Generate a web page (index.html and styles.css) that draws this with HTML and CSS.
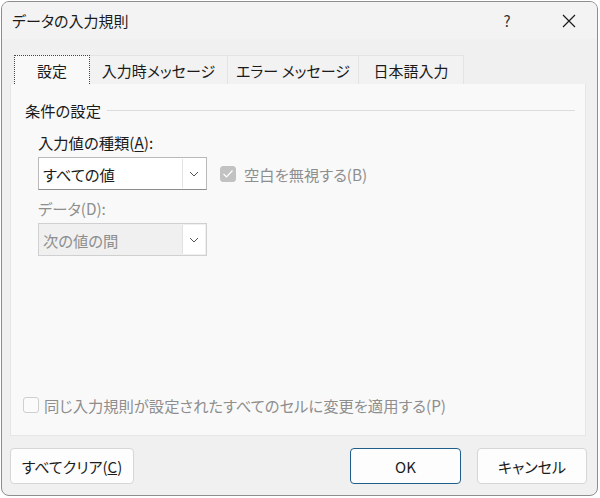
FILE: index.html
```html
<!DOCTYPE html>
<html lang="ja">

<head>
    <meta charset="UTF-8">
    <title>データの入力規則</title>
    <link rel="stylesheet" href="styles.css">
</head>

<body>
    <div class="window">
        <div class="titlebar">
            <span class="title">データの入力規則</span>
            <span class="help">?</span>
            <span class="close">
                <svg width="16" height="16" viewBox="0 0 16 16"><path d="M2 2 L14 14 M14 2 L2 14" stroke="#1a1a1a" stroke-width="1.2" fill="none"/></svg>
            </span>
        </div>

        <div class="tabs">
            <div class="tab active"><span class="focus">設定</span></div>
            <div class="tab">入力時メッセージ</div>
            <div class="tab">エラー メッセージ</div>
            <div class="tab">日本語入力</div>
        </div>

        <div class="panel">
            <div class="group-head">
                <span>条件の設定</span>
                <span class="rule"></span>
            </div>

            <div class="group">
                <div class="label">入力値の種類(<u>A</u>):</div>
                <div class="row">
                    <div class="select">
                        <span class="value">すべての値</span>
                        <span class="drop">
                            <svg width="10" height="6" viewBox="0 0 10 6"><path d="M1 1 L5 5 L9 1" stroke="#555" stroke-width="1" fill="none"/></svg>
                        </span>
                    </div>
                    <label class="check disabled">
                        <span class="box checked">
                            <svg width="12" height="10" viewBox="0 0 12 10"><path d="M1.5 5 L4.5 8 L10.5 1.5" stroke="#fff" stroke-width="1.2" fill="none"/></svg>
                        </span>
                        空白を無視する(B)
                    </label>
                </div>
                <div class="label disabled">データ(D):</div>
                <div class="select off">
                    <span class="value">次の値の間</span>
                    <span class="drop">
                        <svg width="10" height="6" viewBox="0 0 10 6"><path d="M1 1 L5 5 L9 1" stroke="#555" stroke-width="1" fill="none"/></svg>
                    </span>
                </div>
            </div>

            <label class="check disabled bottom">
                <span class="box"></span>
                同じ入力規則が設定されたすべてのセルに変更を適用する(P)
            </label>
        </div>

        <div class="buttons">
            <button class="btn clear">すべてクリア(<u>C</u>)</button>
            <button class="btn ok">OK</button>
            <button class="btn">キャンセル</button>
        </div>
    </div>
</body>

</html>
```

FILE: styles.css
```css
body {
    margin: 0;
    background-color: #ffffff;
    font-family: "Noto Sans CJK JP", "Noto Sans", sans-serif;
    font-feature-settings: "palt";
    color: #1b1b1b;
}

.window {
    margin: 1px;
    width: 597px;
    height: 495px;
    box-sizing: border-box;
    border: 1px solid #8e8e8e;
    border-radius: 8px;
    background-color: #f0f0f0;
    display: flex;
    flex-direction: column;
    overflow: hidden;
}

.titlebar {
    height: 37px;
    display: flex;
    align-items: center;
    padding-left: 10px;
    font-size: 15px;
    background-color: #f3f3f3;
}

.title {
    flex: 1;
}

.help {
    width: 20px;
    text-align: center;
    font-size: 15px;
    color: #333;
    margin-right: 44px;
}

.close {
    width: 16px;
    height: 16px;
    margin-right: 20px;
    display: flex;
}

.tabs {
    display: flex;
    margin-top: 16px;
    padding-left: 12px;
    height: 29px;
}

.tab {
    box-sizing: border-box;
    height: 29px;
    display: flex;
    align-items: center;
    justify-content: center;
    white-space: nowrap;
    font-size: 15px;
    border: 1px solid #e4e4e4;
    border-bottom: none;
    border-left: none;
    background-color: #f2f2f2;
}

.tab:nth-child(2) { width: 138px; }
.tab:nth-child(3) { width: 131px; }
.tab:nth-child(4) { width: 105px; }

.tab.active {
    width: 76px;
    border: none;
    background-color: #f9f9f9;
}

.focus {
    width: 100%;
    height: 100%;
    box-sizing: border-box;
    border: 1px dotted #444;
    border-bottom: none;
    display: flex;
    align-items: center;
    justify-content: center;
}

.panel {
    margin: 0 11px 0 8px;
    height: 352px;
    box-sizing: border-box;
    border: 1px solid #e6e6e6;
    border-top: none;
    background-color: #f9f9f9;
    display: flex;
    flex-direction: column;
    padding: 16px 10px 19px 14px;
    font-size: 15.3px;
}

.group-head {
    display: flex;
    align-items: center;
    height: 20px;
}

.rule {
    flex: 1;
    height: 1px;
    background-color: #dcdcdc;
    margin-left: 6px;
}

.group {
    padding-left: 13px;
    margin-top: 11px;
}

.label {
    height: 22px;
    line-height: 22px;
    margin-bottom: 4px;
}

.label u {
    text-underline-offset: 2px;
}

.row {
    display: flex;
    align-items: center;
    gap: 13px;
}

.select {
    width: 169px;
    height: 33px;
    box-sizing: border-box;
    border: 1px solid #b9b9b9;
    border-bottom-color: #8c8c8c;
    background-color: #ffffff;
    display: flex;
    align-items: center;
}

.select .value {
    flex: 1;
    padding-left: 4px;
}

.drop {
    width: 23px;
    height: 29px;
    margin-right: 1px;
    box-sizing: border-box;
    border-left: 1px solid #e2e2e2;
    background-color: #fff;
    display: flex;
    align-items: center;
    justify-content: center;
}

.select.off {
    background-color: #f0f0f0;
    border-color: #d0d0d0;
    color: #8e8e8e;
}

.group .label.disabled {
    margin-top: 7px;
}

.disabled {
    color: #8e8e8e;
}

.check {
    display: flex;
    align-items: center;
    gap: 8px;
}

.box {
    width: 16px;
    height: 16px;
    box-sizing: border-box;
    border: 1px solid #cfcfcf;
    border-radius: 3px;
    background-color: #fbfbfb;
    display: flex;
    align-items: center;
    justify-content: center;
}

.box.checked {
    background-color: #c2c2c2;
    border-color: #c2c2c2;
}

.bottom {
    margin-top: auto;
    margin-left: -2px;
    gap: 5px;
}

.buttons {
    display: flex;
    margin-top: 12px;
    padding: 0 10px 0 8px;
}

.btn {
    height: 36px;
    box-sizing: border-box;
    border: 1px solid #d6d6d6;
    border-radius: 4px;
    background-color: #fdfdfd;
    font-family: inherit;
    font-feature-settings: "palt";
    font-size: 15px;
    color: #1b1b1b;
    width: 110px;
}

.btn.clear {
    width: 124px;
    margin-right: auto;
}

.btn.ok {
    width: 111px;
    margin-right: 16px;
    border-color: #1f5e8a;
}
```
